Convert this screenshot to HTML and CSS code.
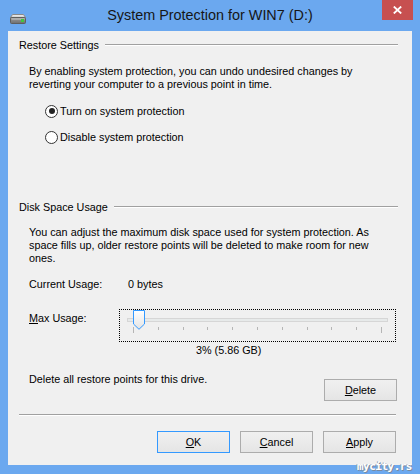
FILE: index.html
```html
<!DOCTYPE html>
<html>
<head>
<meta charset="utf-8">
<link rel="stylesheet" href="styles.css">
</head>
<body>
<div class="window">
  <div class="titlebar">
    <svg class="app-icon" viewBox="0 0 16 10" width="16" height="10">
      <defs>
        <linearGradient id="lid" x1="0" y1="0" x2="0" y2="1">
          <stop offset="0" stop-color="#f4f4f4"/>
          <stop offset="1" stop-color="#c9c9c9"/>
        </linearGradient>
        <linearGradient id="body" x1="0" y1="0" x2="0" y2="1">
          <stop offset="0" stop-color="#9c9c9c"/>
          <stop offset="1" stop-color="#6e6e6e"/>
        </linearGradient>
      </defs>
      <path d="M2.5 0.5 H13.5 L15.5 3.5 H0.5 Z" fill="url(#lid)" stroke="#8a8a8a" stroke-width="1"/>
      <rect x="0.5" y="3.5" width="15" height="6" rx="1" fill="url(#body)" stroke="#5e5e5e"/>
      <rect x="1.5" y="4.5" width="13" height="1" fill="#c8c8c8"/>
      <rect x="11" y="5" width="3" height="3" fill="#3fc83f"/>
    </svg>
    <div class="title">System Protection for WIN7 (D:)</div>
    <div class="close">
      <svg viewBox="0 0 9 8" width="9" height="8"><path d="M0.8 0.5 L8.2 7.5 M8.2 0.5 L0.8 7.5" stroke="#fff" stroke-width="1.8"/></svg>
    </div>
  </div>

  <div class="client">
    <section class="group">
      <div class="group-head"><span>Restore Settings</span><div class="rule"></div></div>
      <p class="para p1">By enabling system protection, you can undo undesired changes by<br>reverting your computer to a previous point in time.</p>
      <div class="radios">
        <label class="radio"><span class="circle checked"></span>Turn on system protection</label>
        <label class="radio"><span class="circle"></span>Disable system protection</label>
      </div>
    </section>

    <section class="group g2">
      <div class="group-head"><span>Disk Space Usage</span><div class="rule"></div></div>
      <p class="para p2">You can adjust the maximum disk space used for system protection. As<br>space fills up, older restore points will be deleted to make room for new<br>ones.</p>
      <div class="usage-row">
        <span class="usage-label">Current Usage:</span><span>0 bytes</span>
      </div>
      <div class="max-row">
        <span class="max-label"><u>M</u>ax Usage:</span>
        <div class="slider">
          <div class="track"></div>
          <div class="ticks">
            <span class="tick long"></span><span class="tick"></span><span class="tick"></span><span class="tick"></span><span class="tick"></span><span class="tick"></span><span class="tick"></span><span class="tick"></span><span class="tick"></span><span class="tick"></span><span class="tick long"></span>
          </div>
          <svg class="thumb" viewBox="0 0 12 20" width="12" height="20">
            <defs>
              <linearGradient id="th" x1="0" y1="0" x2="0" y2="1">
                <stop offset="0" stop-color="#ffffff"/>
                <stop offset="1" stop-color="#e3e3e3"/>
              </linearGradient>
            </defs>
            <path d="M0.5 0.5 H11.5 V14 L6 19.3 L0.5 14 Z" fill="url(#th)" stroke="#3399ff" stroke-width="1"/>
          </svg>
        </div>
      </div>
      <div class="value">3% (5.86 GB)</div>
      <div class="delete-row">
        <span>Delete all restore points for this drive.</span>
        <button class="btn delete"><u>D</u>elete</button>
      </div>
    </section>

    <div class="separator"></div>

    <div class="actions">
      <button class="btn default"><u>O</u>K</button>
      <button class="btn"><u>C</u>ancel</button>
      <button class="btn"><u>A</u>pply</button>
    </div>
  </div>

  <div class="watermark">mycity.rs</div>
</div>
</body>
</html>
```

FILE: styles.css
```css
* { box-sizing: border-box; margin: 0; padding: 0; }
html, body { width: 420px; height: 474px; overflow: hidden; }
body {
  font-family: "Liberation Sans", Arial, sans-serif;
  font-size: 10.8px;
  color: #000;
  background: #6ba8ef;
}
.window {
  position: relative;
  width: 420px;
  height: 474px;
  background: #6ba8ef;
  display: flex;
  flex-direction: column;
}
.titlebar {
  height: 31px;
  flex: none;
  display: grid;
  grid-template-columns: 1fr auto 1fr;
}
.app-icon { display: block; margin: 14px 0 0 10px; }
.title {
  font-size: 14.4px;
  line-height: 31px;
  color: #161616;
  white-space: nowrap;
}
.close {
  justify-self: end;
  width: 31px;
  height: 20px;
  margin-right: 7px;
  background: #c75050;
  display: flex;
  align-items: center;
  justify-content: center;
}
.close svg { display: block; }

.client {
  margin: 0 8px;
  height: 434px;
  background: #f0f0f0;
  padding: 7px 14px 0 11px;
  flex: none;
}
.group-head {
  display: flex;
  align-items: center;
  height: 14px;
  line-height: 14px;
}
.rule {
  flex: 1;
  margin-left: 6px;
  height: 2px;
  border-top: 1px solid #a0a0a0;
  border-bottom: 1px solid #ffffff;
}
.para { line-height: 13px; margin-left: 10px; }
.p1 { margin-top: 13px; }
.radios { margin-top: 7px; margin-left: 26px; }
.radio {
  display: flex;
  align-items: center;
  height: 26px;
  gap: 2px;
}
.circle {
  width: 13px;
  height: 13px;
  border: 1px solid #333;
  border-radius: 50%;
  background: #fff;
  display: flex;
  align-items: center;
  justify-content: center;
}
.circle.checked::after {
  content: "";
  width: 6px;
  height: 6px;
  border-radius: 50%;
  background: #222;
}

.g2 { margin-top: 50px; }
.p2 { margin-top: 12px; }
.usage-row { margin: 13px 0 0 10px; line-height: 13px; display: flex; }
.usage-label { width: 99px; }
.max-row { margin: 18px 0 0 10px; display: flex; }
.max-label { width: 90px; padding-top: 3px; line-height: 13px; }
.slider {
  position: relative;
  width: 277px;
  height: 33px;
  border: 1px dotted #000;
  padding: 8px 7px 0 7px;
}
.track {
  height: 4px;
  background: #e7eaea;
  border: 1px solid #d6d6d6;
}
.ticks {
  display: flex;
  justify-content: space-between;
  align-items: flex-start;
  margin: 5px 6px 0 6px;
}
.tick { width: 1px; height: 3px; background: #b5b5b5; }
.tick.long { height: 6px; }
.thumb { position: absolute; left: 13px; top: 0; display: block; }
.value { margin: 2px 0 0 177px; line-height: 13px; }
.delete-row {
  margin: 16px 1px 0 10px;
  display: flex;
  justify-content: space-between;
  align-items: flex-start;
  line-height: 13px;
}
.btn {
  font-family: inherit;
  font-size: 10.8px;
  color: #000;
  width: 73px;
  height: 22px;
  background: linear-gradient(#f0f0f0, #e5e5e5);
  border: 1px solid #acacac;
  line-height: 20px;
  text-align: center;
}
.btn.delete { margin-top: 6px; }
.btn.default { border-color: #3399ff; }
.separator {
  margin: 13px 2px 0 0;
  height: 2px;
  border-top: 1px solid #a0a0a0;
  border-bottom: 1px solid #ffffff;
}
.actions {
  margin-top: 15px;
  padding-right: 2px;
  display: flex;
  justify-content: flex-end;
  gap: 10px;
}
.watermark {
  position: absolute;
  right: 8px;
  bottom: 1px;
  font-family: "DejaVu Sans Mono", monospace;
  font-size: 11px;
  font-weight: bold;
  color: #fff;
  text-shadow: 1px 1px 0 #7a8aa0, -1px 0 0 #9ab;
  letter-spacing: -0.5px;
}
```
